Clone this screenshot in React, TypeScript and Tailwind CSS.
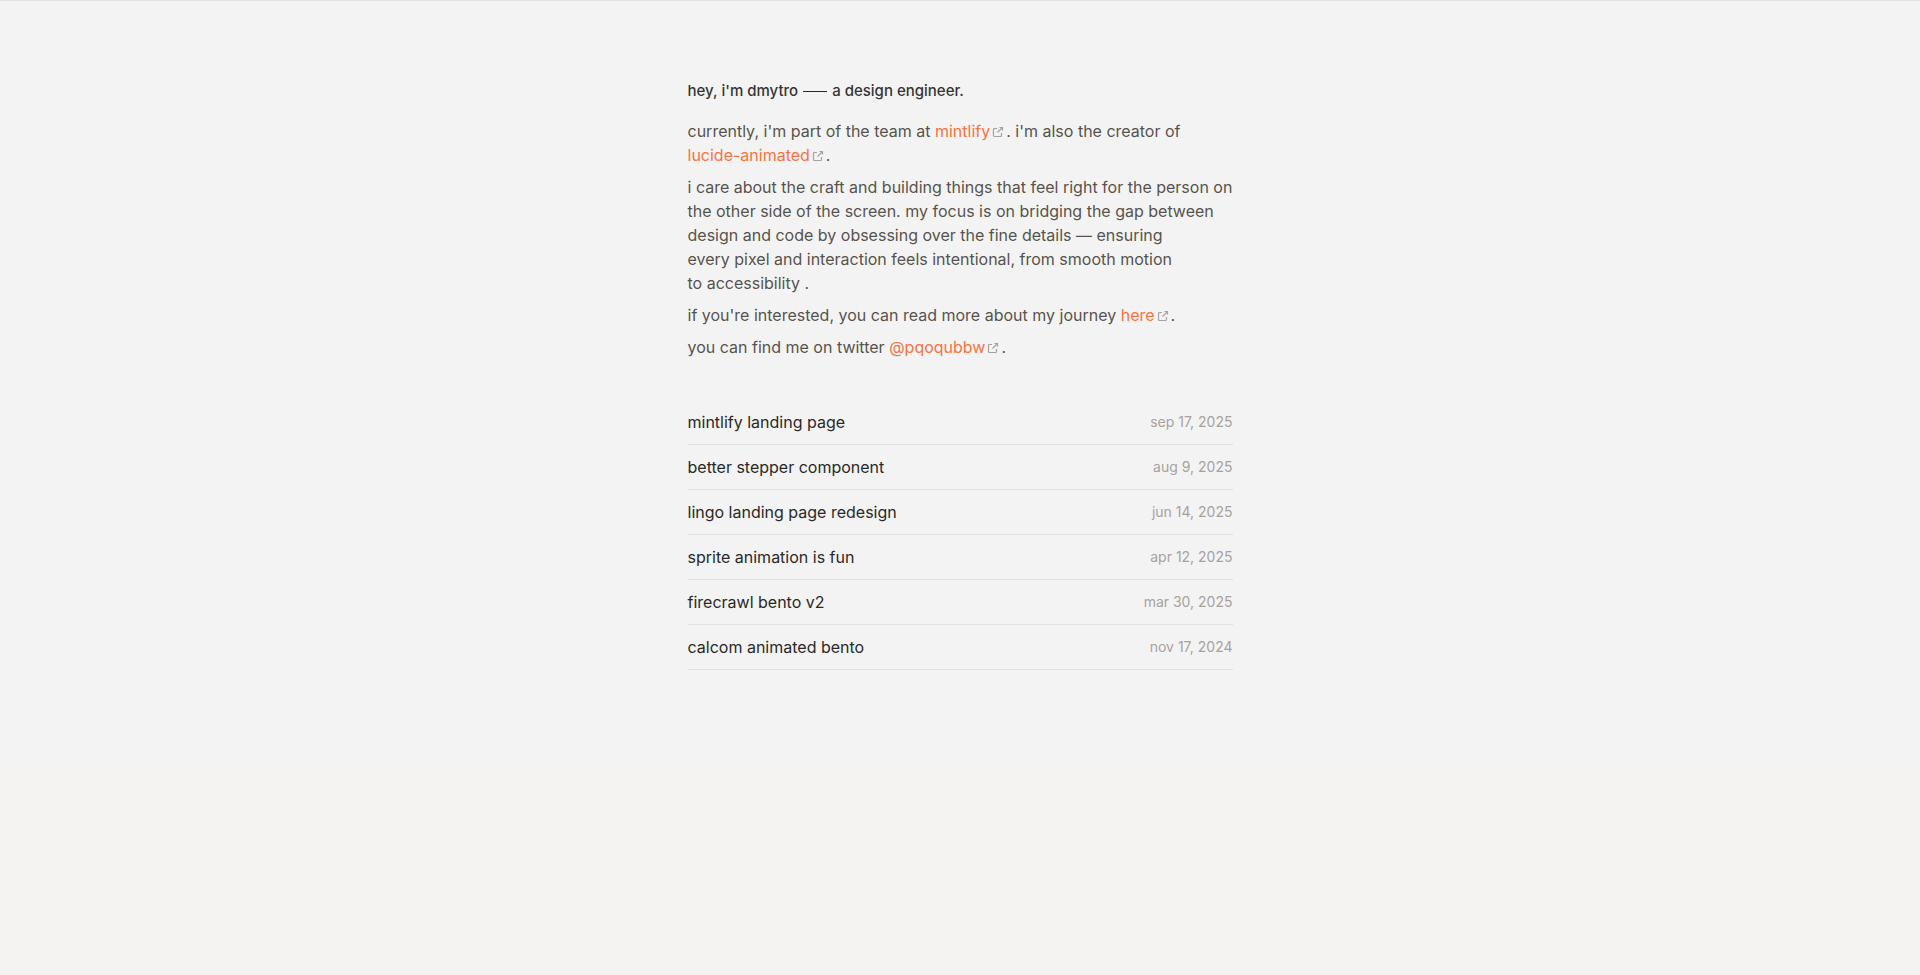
import type { ReactNode } from "react"

const POSTS = [
  { title: "mintlify landing page", date: "sep 17, 2025" },
  { title: "better stepper component", date: "aug 9, 2025" },
  { title: "lingo landing page redesign", date: "jun 14, 2025" },
  { title: "sprite animation is fun", date: "apr 12, 2025" },
  { title: "firecrawl bento v2", date: "mar 30, 2025" },
  { title: "calcom animated bento", date: "nov 17, 2024" },
]

function ExternalLink({ children }: { children: ReactNode }) {
  return (
    <a href="#" className="text-[#f97240] whitespace-nowrap">
      {children}
      <svg
        viewBox="0 0 12 12"
        fill="none"
        stroke="currentColor"
        strokeWidth="1.2"
        aria-hidden="true"
        className="inline-block size-3 mx-0.5 -mb-px align-baseline text-[#a8a29e]"
      >
        <path d="M5 2.500H2.500a1 1 0 0 0-1 1V9.500a1 1 0 0 0 1 1H8.500a1 1 0 0 0 1-1V7" />
        <path d="M7.500 1.500h3V4.500M10.500 1.500 5.500 6.500" />
      </svg>
    </a>
  )
}

export default function App() {
  return (
    <div className="min-h-screen bg-[#f4f3f1] font-['Inter',sans-serif]">
      <main className="border-t border-[#e0e0e0] bg-[#f3f3f3] pt-[78px] pb-[91px]">
        <div className="mx-auto w-full max-w-[545px]">
          <h1 className="text-[15px] leading-6 font-medium text-[#353535]">
            hey, i'm dmytro <span className="mx-px inline-block h-px w-6 bg-[#292929] align-middle" /> a design engineer.
          </h1>

          <div className="mt-4 space-y-2 text-base leading-6 text-[#57534e]">
            <p>
              currently, i'm part of the team at <ExternalLink>mintlify</ExternalLink>. i'm also the creator of
              <br />
              <ExternalLink>lucide-animated</ExternalLink>.
            </p>
            <p className="whitespace-nowrap">
              i care about the craft and building things that feel right for the person on
              <br />
              the other side of the screen. my focus is on bridging the gap between
              <br />
              design and code by obsessing over the fine details — ensuring
              <br />
              every pixel and interaction feels intentional, from smooth motion
              <br />
              to accessibility .
            </p>
            <p>
              if you're interested, you can read more about my journey <ExternalLink>here</ExternalLink>.
            </p>
            <p>
              you can find me on twitter <ExternalLink>@pqoqubbw</ExternalLink>.
            </p>
          </div>

          <ul className="mt-[41px]">
            {POSTS.map((post) => (
              <li key={post.title} className="border-b border-[#e0e0e0]">
                <a href="#" className="flex items-center justify-between py-2.5">
                  <span className="text-base leading-6 text-[#292929]">{post.title}</span>
                  <span className="text-sm leading-6 text-[#a8a29e]">{post.date}</span>
                </a>
              </li>
            ))}
          </ul>
        </div>
      </main>
    </div>
  )
}
